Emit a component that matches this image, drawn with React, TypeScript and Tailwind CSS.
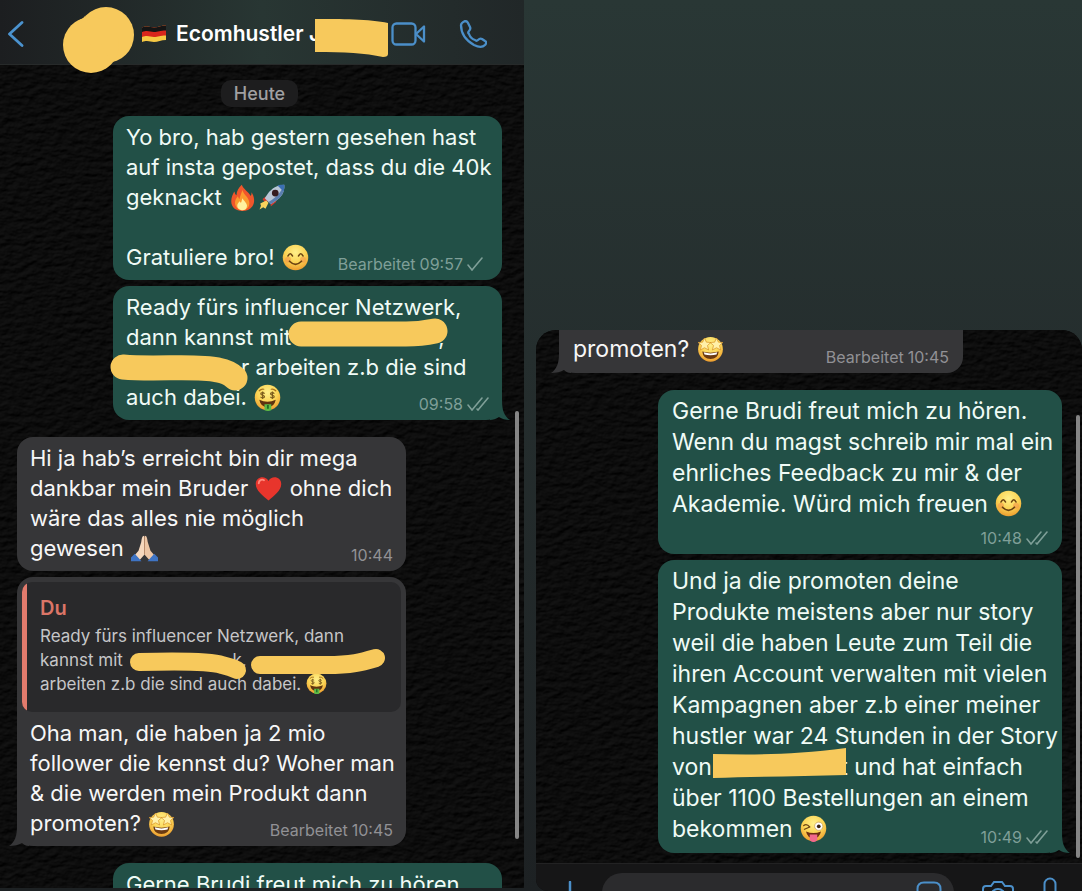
import { ReactNode } from "react";

const faceDefs = (
    <defs>
        <radialGradient id="face" cx="50%" cy="30%" r="72%">
            <stop offset="0" stopColor="#fff08a" />
            <stop offset="0.55" stopColor="#fbd455" />
            <stop offset="1" stopColor="#ec9a2c" />
        </radialGradient>
    </defs>
)

const drawings: Record<string, ReactNode> = {
    fire: (
        <>
            <path d="M17 1c2 6 9 9 12 15 1-2 1-3 1-5 4 6 5 14 1 19-3 4-8 6-13 6C9 36 3 31 3 23c0-5 2-9 4-13 1 2 1 4 3 5 0-6 3-10 7-14z" fill="#f0562b" />
            <path d="M18 8c1 6 8 9 9 16 1 7-4 11-9 11S8 31 8 25c0-4 2-6 4-9 0 2 1 3 2 4 1-4 2-7 4-12z" fill="#fb9a2e" />
            <path d="M18 19c1 3 6 6 6 10s-3 6-6 6-7-2-7-6c0-3 2-4 3-6 1 1 1 2 2 2 1-2 1-4 2-6z" fill="#fff1a0" />
        </>
    ),
    rocket: (
        <>
            <path d="M6 20l8-6 4 4-8 8z" fill="#d23b2d" />
            <path d="M17 30l7-6 1-6-8 4z" fill="#d23b2d" />
            <path d="M11 22L3 26l1 3-2 5 5-3 3 2 4-8z" fill="#f7d25c" />
            <path d="M35 1c1 10-4 17-12 22l-6 4-8-8 4-6C18 6 26 1 35 1z" fill="#b9c6d6" />
            <path d="M35 1c1 10-4 17-12 22l-6 4-3-3C25 18 31 10 35 1z" fill="#5b7fb0" />
            <path d="M26 2c3-1 6-1 9-1 0 3 0 6-1 9z" fill="#3b6fb4" />
            <circle cx="23" cy="12" r="4.5" fill="#351c20" />
        </>
    ),
    smile: (
        <>
            <circle cx="18" cy="18" r="17" fill="url(#face)" />
            <circle cx="8" cy="21" r="4" fill="#f4924a" opacity="0.55" />
            <circle cx="28" cy="21" r="4" fill="#f4924a" opacity="0.55" />
            <path d="M8 16q3-6 6 0M22 16q3-6 6 0M10 23q8 8 16 0" fill="none" stroke="#6b4312" strokeWidth="2.2" strokeLinecap="round" />
        </>
    ),
    money: (
        <>
            <circle cx="18" cy="18" r="17" fill="url(#face)" />
            <path d="M7 9q3-3 6-2M23 7q3-1 6 2" fill="none" stroke="#a8731c" strokeWidth="1.6" strokeLinecap="round" />
            <path d="M14 13c-1-2-5-2-5 0 0 3 5 1 5 4 0 2-5 2-5 0M11.5 10v10M27 13c-1-2-5-2-5 0 0 3 5 1 5 4 0 2-5 2-5 0M24.500 10v10" fill="none" stroke="#7a5a1c" strokeWidth="1.500" />
            <path d="M7 21q11 5 22 0-2 10-11 10T7 21z" fill="#5f3310" />
            <path d="M14 27h9v8q-4 2-9 0z" fill="#5dbb46" />
            <path d="M18.500 28v5" stroke="#226b27" strokeWidth="2.500" />
        </>
    ),
    heart: (
        <>
            <path d="M18 34C11 28 1 21 1 12 1 2 14 0 18 8c4-8 17-6 17 4 0 9-10 16-17 22z" fill="#e8352c" />
            <path d="M5 11c0-4 4-6 7-4" fill="none" stroke="#ff8a7c" strokeWidth="2.500" strokeLinecap="round" />
        </>
    ),
    pray: (
        <>
            <path d="M17.500 1c-3 0-3 4-4 9L10 21l-6 7 7 6 7-8z" fill="#f6d8bd" />
            <path d="M18.500 1c3 0 3 4 4 9L26 21l6 7-7 6-7-8z" fill="#edc6a5" />
            <path d="M18 2v24" stroke="#b98a6a" strokeWidth="1.200" />
            <path d="M0 30l5-5 9 10H0zM36 30l-5-5-9 10h14z" fill="#3f74c4" />
        </>
    ),
    star: (
        <>
            <circle cx="18" cy="19" r="16.500" fill="url(#face)" />
            <path d="M10 4l2.500 5.500 6 .5-4.500 4 1.500 6-5.500-3-5.500 3 1.500-6-4.500-4 6-.5zM26 4l2.500 5.500 6 .5-4.500 4 1.500 6-5.500-3-5.500 3 1.500-6-4.500-4 6-.5z" fill="#fff0a8" stroke="#d9972b" strokeWidth="1" />
            <path d="M7 22q11 3 22 0-1 10-11 10T7 22z" fill="#6b3a12" />
            <path d="M9 23q9 3 18 0l-1 3q-8 2-16 0z" fill="#fff" />
        </>
    ),
    wink: (
        <>
            <circle cx="18" cy="18" r="17" fill="url(#face)" />
            <path d="M5 14q4-3 8 2M6 19l7-3" fill="none" stroke="#6b4312" strokeWidth="1.800" strokeLinecap="round" />
            <circle cx="25" cy="15" r="5.500" fill="#fff" stroke="#b98b4a" strokeWidth="0.800" />
            <circle cx="25" cy="15" r="2.500" fill="#3b2410" />
            <path d="M8 22q10 4 20 0-2 9-10 9T8 22z" fill="#6b2c12" />
            <path d="M13 26h10v5q0 5-5 5t-5-5z" fill="#f2688c" />
        </>
    ),
}

function Emoji({ name, label, small }: { name: string, label: string, small?: boolean }) {
    return (
        <svg role="img" aria-label={label} viewBox="0 0 36 36" className={small ? "inline-block size-[21px] -mt-1" : "inline-block size-[27px] -mt-1 mx-px"}>
            {faceDefs}
            {drawings[name]}
        </svg>
    )
}

// yellow marker stroke that covers a name
function Marker({ d, width, className, children }: { d: string, width: number, className: string, children?: ReactNode }) {
    return (
        <span className={"relative inline-block text-right align-top " + className}>
            {children}
            <svg className="absolute left-0 top-0 z-10 size-full overflow-visible" fill="none">
                <path d={d} stroke="#f7c95c" strokeWidth={width} strokeLinecap="round" strokeLinejoin="round" />
            </svg>
        </span>
    )
}

function Wallpaper() {
    return (
        <svg className="absolute inset-0 size-full" aria-hidden="true">
            <filter id="leather" x="0" y="0" width="100%" height="100%" colorInterpolationFilters="sRGB">
                <feTurbulence type="fractalNoise" baseFrequency="0.1 0.18" numOctaves="5" seed="8" result="n" />
                <feDiffuseLighting in="n" surfaceScale="1.800" diffuseConstant="0.085" lightingColor="#ffffff">
                    <feDistantLight azimuth="240" elevation="35" />
                </feDiffuseLighting>
            </filter>
            <rect width="100%" height="100%" filter="url(#leather)" />
        </svg>
    )
}

function Meta({ time, edited, ticks, out }: { time: string, edited?: boolean, ticks?: number, out?: boolean }) {
    return (
        <span className={"flex items-center gap-1 text-base leading-4 " + (out ? "text-[#7f9f98]" : "text-[#919195]")}>
            {edited && <span>Bearbeitet</span>}
            <time>{time}</time>
            {ticks && (
                <svg viewBox="0 0 22 14" className="h-[14px] w-[22px]" fill="none" stroke="currentColor" strokeWidth="1.600" strokeLinecap="round">
                    <path d="M1 8l4 5L15 1" />
                    {ticks == 2 && <path d="M10 12l1 1L21 1" />}
                </svg>
            )}
        </span>
    )
}

function Bubble({ out, tail, className, children }: { out?: boolean, tail?: boolean, className?: string, children: ReactNode }) {
    return (
        <div className={"relative rounded-2xl pb-2 whitespace-nowrap " + (out ? "self-end bg-[#225047] text-[#f0fbf6] " : "self-start bg-[#363638] text-[#f7f7f7] ") + className}>
            {children}
            {tail && out && (
                <svg viewBox="0 0 20 20" className="absolute -right-2 bottom-0 size-5" fill="#225047"><path d="M0 0h12c0 10 2 16 8 20-5 0-8-1-11-3-3 2-6 3-9 3z" /></svg>
            )}
            {tail && !out && (
                <svg viewBox="0 0 20 20" className="absolute -left-2 bottom-0 size-5" fill="#363638"><path d="M20 0H8c0 10-2 16-8 20 5 0 10-1 13-3 2 2 4 3 7 3z" /></svg>
            )}
        </div>
    )
}

function LastLine({ children, meta }: { children?: ReactNode, meta: ReactNode }) {
    return <div className="relative z-[1] flex items-end justify-between"><p>{children}</p>{meta}</div>
}

const leftBubble = "w-[389px] px-[13px] pt-[6px] text-[22px] leading-[30px]"
const rightBubble = "w-[404px] px-[14px] text-[23px] leading-[31px]"

export default function App() {
    return (
        <main className="flex h-screen overflow-hidden bg-[#222b2b] font-['Inter',sans-serif]">
            <section className="flex w-[524px] shrink-0 flex-col border-b-[3px] border-[#1d2123] bg-[#0d0d0d]">
                <header className="relative z-20 flex h-16 shrink-0 items-center bg-linear-to-r from-[#1c1e20] via-[#283633] via-50% to-[#212728] pl-2 pt-1 text-white">
                    <button aria-label="Zurück">
                        <svg viewBox="0 0 16 26" className="h-[26px] w-4" fill="none" stroke="#4b93cf" strokeWidth="2.800" strokeLinecap="round" strokeLinejoin="round"><path d="M14 1.500L1.500 13 14 24.500" /></svg>
                    </button>
                    <svg viewBox="0 0 71 66" className="ml-[39px] mt-3 h-[66px] w-[71px] shrink-0" fill="#f7c95c">
                        <circle cx="43" cy="28" r="28" />
                        <circle cx="28" cy="38" r="28" />
                        <path d="M14 14q5-1 8-5l27 47q-4 1-7 6z" />
                    </svg>
                    <svg role="img" aria-label="Deutschland" viewBox="0 0 24 18" className="ml-2 h-[18px] w-6">
                        <clipPath id="wave"><path d="M0 2.500c6-2 8 0 12 0s7-2 12-2V15c-5 0-8 2-12 2S6 15 0 17z" /></clipPath>
                        <g clipPath="url(#wave)">
                            <path d="M0 0h24v18H0z" fill="#f6c944" />
                            <path d="M0 0h24v10.500c-6 0-8 1.500-12 1.500S6 10 0 12z" fill="#d8261c" />
                            <path d="M0 0h24v5.500c-6 0-8 1.500-12 1.500S6 5 0 7z" fill="#151515" />
                        </g>
                    </svg>
                    <h1 className="ml-[10px] w-[139px] shrink-0 overflow-visible whitespace-nowrap text-[21px] font-semibold leading-7">Ecomhustler J</h1>
                    <svg viewBox="0 0 74 40" className="relative mt-2 h-10 w-[74px] shrink-0" fill="#f7c95c"><path d="M0 1c25 0 55 0 73 4v31q0 3-5 3C50 35 30 34 0 34z" /></svg>
                    <button aria-label="Videoanruf" className="ml-[2px]">
                        <svg viewBox="0 0 36 24" className="h-6 w-9" fill="none" stroke="#4b8fc9" strokeWidth="2.300" strokeLinejoin="round"><rect x="1.500" y="1.500" width="23" height="21" rx="4" /><path d="M25 12l8-7.500v15z" /></svg>
                    </button>
                    <button aria-label="Anruf" className="ml-8">
                        <svg viewBox="0 0 28 28" className="size-7" fill="none" stroke="#4b8fc9" strokeWidth="2.300" strokeLinejoin="round"><path d="M2 5c0-2 2-3 4-4 1 0 2 0 3 2l2 4c1 2 0 3-1 4s-1 2 0 3c1 3 3 5 6 6 1 1 2 1 3 0s2-2 4-1l3 2c2 1 1 3 0 4-3 3-7 2-11 0C8 21 2 14 2 5z" /></svg>
                    </button>
                </header>
                <div className="relative flex-1 overflow-hidden border-t border-[#272a2a]">
                    <Wallpaper />
                    <div className="relative flex flex-col pl-[17px] pr-[22px] pt-[15px]">
                        <p className="h-[27px] self-center rounded-[10px] bg-[#1d1d1e] px-[13px] text-[18px] font-medium leading-[27px] text-[#a0a0a2]">Heute</p>
                        <Bubble out className={"mt-[9px] " + leftBubble}>
                            <p>Yo bro, hab gestern gesehen hast</p>
                            <p>auf insta gepostet, dass du die 40k</p>
                            <p>geknackt <Emoji name="fire" label="🔥" /><Emoji name="rocket" label="🚀" /></p>
                            <p>&nbsp;</p>
                            <LastLine meta={<Meta out edited time="09:57" ticks={1} />}>Gratuliere bro! <Emoji name="smile" label="😊" /></LastLine>
                        </Bubble>
                        <Bubble out tail className={"mt-[6px] " + leftBubble}>
                            <p>Ready fürs influencer Netzwerk,</p>
                            <p>dann kannst mit<Marker className="h-[30px] w-[147px]" width={25} d="M10 12H115Q130 12 144 9" />,</p>
                            <p><Marker className="h-[30px] w-[115px]" width={25} d="M-3 15C30 18 70 13 92 18Q103 20 109 26" />r arbeiten z.b die sind</p>
                            <LastLine meta={<Meta out time="09:58" ticks={2} />}>auch dabei. <Emoji name="money" label="🤑" /></LastLine>
                        </Bubble>
                        <Bubble className={"mt-[17px] " + leftBubble}>
                            <p>Hi ja hab’s erreicht bin dir mega</p>
                            <p>dankbar mein Bruder <Emoji name="heart" label="❤️" /> ohne dich</p>
                            <p>wäre das alles nie möglich</p>
                            <LastLine meta={<Meta time="10:44" />}>gewesen <Emoji name="pray" label="🙏🏻" /></LastLine>
                        </Bubble>
                        <Bubble tail className="mt-[6px] w-[389px] p-[5px] text-[22px] leading-[30px]">
                            <blockquote className="flex h-[130px] overflow-hidden rounded-[10px] bg-[#29292b] text-[17px] leading-6 text-[#c6c6c8]">
                                <span className="w-[5px] bg-[#e27b6d]" />
                                <div className="pl-[13px] pt-[14px]">
                                    <p className="mb-1 text-[20px] font-semibold text-[#dc7567]">Du</p>
                                    <p>Ready fürs influencer Netzwerk, dann</p>
                                    <p>kannst mit <Marker className="h-6 w-[119px]" width={18} d="M11 14C47 13 82 13 94 17Q103 19 109 22">k,</Marker><Marker className="h-6 w-[139px]" width={18} d="M13 17H80C105 17 115 14 129 10" /></p>
                                    <p>arbeiten z.b die sind auch dabei. <Emoji small name="money" label="🤑" /></p>
                                </div>
                            </blockquote>
                            <div className="px-2 pt-[6px]">
                                <p>Oha man, die haben ja 2 mio</p>
                                <p>follower die kennst du? Woher man</p>
                                <p>&amp; die werden mein Produkt dann</p>
                                <LastLine meta={<Meta edited time="10:45" />}>promoten? <Emoji name="star" label="🤩" /></LastLine>
                            </div>
                        </Bubble>
                        <Bubble out className={"mt-[17px] " + leftBubble}>
                            <p>Gerne Brudi freut mich zu hören.</p>
                        </Bubble>
                    </div>
                    <span className="absolute bottom-[49px] right-[5px] top-[346px] w-1 rounded-full bg-[#858585]" />
                </div>
            </section>

            <section className="flex min-w-0 flex-1 flex-col bg-linear-to-b from-[#293735] via-[#252e2e] via-40% to-[#1d2123] pl-3">
                <div className="h-[330px] shrink-0" />
                <div className="relative flex flex-1 flex-col overflow-hidden rounded-t-[20px] rounded-bl-xl bg-[#0d0d0d]">
                    <div className="relative flex-1 overflow-hidden">
                        <Wallpaper />
                        <div className="relative flex flex-col pl-[23px] pr-5">
                            <Bubble tail className={"rounded-t-none pt-1 " + rightBubble}>
                                <LastLine meta={<Meta edited time="10:45" />}>promoten? <Emoji name="star" label="🤩" /></LastLine>
                            </Bubble>
                            <Bubble out className={"mt-[17px] pt-[6px] " + rightBubble}>
                                <p>Gerne Brudi freut mich zu hören.</p>
                                <p>Wenn du magst schreib mir mal ein</p>
                                <p>ehrliches Feedback zu mir &amp; der</p>
                                <p>Akademie. Würd mich freuen <Emoji name="smile" label="😊" /></p>
                                <div className="flex h-[26px] items-end justify-end"><Meta out time="10:48" ticks={2} /></div>
                            </Bubble>
                            <Bubble out tail className={"mt-[6px] pt-[6px] " + rightBubble}>
                                <p>Und ja die promoten deine</p>
                                <p>Produkte meistens aber nur story</p>
                                <p>weil die haben Leute zum Teil die</p>
                                <p>ihren Account verwalten mit vielen</p>
                                <p>Kampagnen aber z.b einer meiner</p>
                                <p>hustler war 24 Stunden in der Story</p>
                                <p>von
                                    <span className="relative inline-block h-[31px] w-[136px] text-right align-top">t
                                        <svg className="absolute left-0 top-0 z-10 size-full overflow-visible" fill="#f7c95c"><path d="M1 2C40 3 80 3 134-4V23C90 24 40 25 1 26z" /></svg>
                                    </span> und hat einfach</p>
                                <p>über 1100 Bestellungen an einem</p>
                                <LastLine meta={<Meta out time="10:49" ticks={2} />}>bekommen <Emoji name="wink" label="😜" /></LastLine>
                            </Bubble>
                        </div>
                        <span className="absolute bottom-[5px] right-[2px] top-[85px] w-1 rounded-full bg-[#858585]" />
                    </div>
                    <footer className="flex h-7 shrink-0 items-start overflow-hidden border-t border-[#222223] bg-[#161617] pr-5">
                        <button aria-label="Anhang" className="ml-[22px] mt-[17px]">
                            <svg viewBox="0 0 24 24" className="size-6" fill="none" stroke="#4b8fc9" strokeWidth="2.500" strokeLinecap="round"><path d="M12 1v22M1 12h22" /></svg>
                        </button>
                        <div className="ml-5 mt-[9px] flex h-10 flex-1 rounded-[20px] bg-[#2b2b2d]">
                            <input aria-label="Nachricht" className="min-w-0 flex-1 bg-transparent pl-4 text-white outline-none" />
                            <button aria-label="Sticker" className="mr-3 mt-2 self-start">
                                <svg viewBox="0 0 26 26" className="size-[26px]" fill="none" stroke="#4b8fc9" strokeWidth="2"><path d="M8 1.500h10q6.500 0 6.500 6.500v8l-8.500 8.500H8q-6.500 0-6.500-6.500V8q0-6.500 6.500-6.500z" /></svg>
                            </button>
                        </div>
                        <button aria-label="Kamera" className="ml-7 mt-[17px]">
                            <svg viewBox="0 0 32 28" className="h-7 w-8" fill="none" stroke="#4b8fc9" strokeWidth="2"><path d="M4 5h5l3-4h8l3 4h5q3 0 3 3v16q0 3-3 3H4q-3 0-3-3V8q0-3 3-3z" /><circle cx="16" cy="15" r="7" /></svg>
                        </button>
                        <button aria-label="Sprachnachricht" className="ml-6 mt-[13px]">
                            <svg viewBox="0 0 24 32" className="h-8 w-6" fill="none" stroke="#4b8fc9" strokeWidth="2"><rect x="6.500" y="1.500" width="11" height="20" rx="5.500" /><path d="M1 17c0 12 22 12 22 0" /></svg>
                        </button>
                    </footer>
                </div>
            </section>
        </main>
    )
}
